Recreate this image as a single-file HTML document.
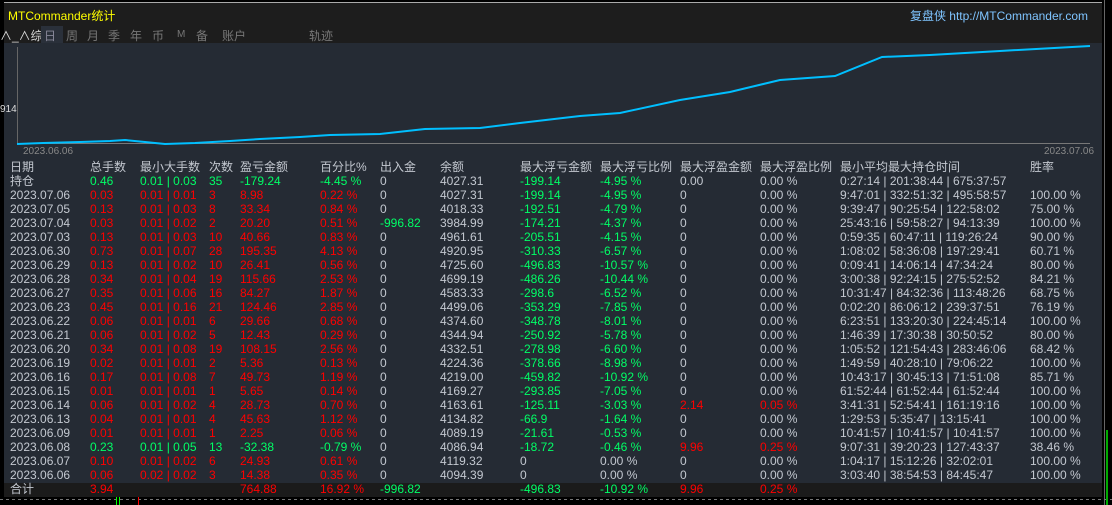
<!DOCTYPE html>
<html><head><meta charset="utf-8"><style>
*{margin:0;padding:0;box-sizing:border-box}
body{width:1112px;height:505px;background:#000;position:relative;overflow:hidden;font-family:"Liberation Sans","Noto Sans CJK SC",sans-serif;font-size:12px;color:#c3c8d0}
.top{position:absolute;left:4px;top:2px;width:1098px;height:41px;background:#1d1d1d;border-top:1px solid #aaa}
.title{position:absolute;left:4px;top:4px;color:#ffff00;font-size:12px}
.url{position:absolute;right:14px;top:4px;color:#7fc4ff;font-size:12px}
.tabs{position:absolute;left:0;top:24px;width:400px;height:18px;color:#777;font-size:12px;white-space:nowrap}
.tabs span{position:absolute;top:0;white-space:nowrap}
.main{position:absolute;left:4px;top:43px;width:1098px;height:454px;background:#252b34}
.tot{position:absolute;left:4px;top:483px;width:1098px;height:14px;background:#1b1b1b}
.r{position:absolute;left:0;width:1100px;height:14px;line-height:14px;white-space:nowrap}
.r span{position:absolute;top:0;white-space:nowrap}
.R{color:#f00}.G{color:#00ff66}
</style></head><body>
<div class="top"><div class="title">MTCommander统计</div><div class="url">复盘侠 http://MTCommander.com</div>
<div class="tabs"><span style="left:-4px;color:#ddd">∧_∧综∧</span><span style="left:37px;width:22px;height:17px;top:-1px;background:#2a303a"></span><span style="left:40px;color:#889">日</span><span style="left:62px">周</span><span style="left:83px">月</span><span style="left:104px">季</span><span style="left:126px">年</span><span style="left:148px">币</span><span style="left:173px;font-size:10px;top:2px">M</span><span style="left:192px">备</span><span style="left:218px">账户</span><span style="left:305px">轨迹</span></div></div>
<div class="main"></div>
<svg style="position:absolute;left:0;top:0" width="1112" height="505">
<line x1="17.5" y1="47" x2="17.5" y2="144" stroke="#666"/>
<line x1="17" y1="143.5" x2="1090" y2="143.5" stroke="#777"/>
<polyline fill="none" stroke="#00bfff" stroke-width="2" points="17,144 43,143 80,142 110,141 125,140 145,142 165,144 195,143 230,141 260,139 300,137 330,135 380,134 425,129 480,128 520,123 580,116 620,113 680,100 730,92 780,80 835,76 882,57 930,55 1000,51 1090,46"/>
<text x="23" y="154" fill="#888" font-size="10" font-family="Liberation Sans">2023.06.06</text>
<text x="1044" y="154" fill="#888" font-size="10" font-family="Liberation Sans">2023.07.06</text>
<text x="0" y="112" fill="#ddd" font-size="10" font-family="Liberation Sans">914</text>
<line x1="1104.5" y1="0" x2="1104.5" y2="505" stroke="#666"/>
<line x1="0" y1="499.5" x2="1112" y2="499.5" stroke="#777" stroke-dasharray="3,3"/>
<rect x="116" y="497" width="1" height="8" fill="#0f0"/><rect x="119" y="497" width="1" height="8" fill="#0f0"/><rect x="138" y="497" width="1" height="8" fill="#f00"/>
<rect x="1106" y="430" width="2" height="75" fill="#0a0"/>
</svg>
<div class="tot"></div>
<div id="t"></div>
<script>
const cols=[10,90,140,209,240,320,380,440,520,600,680,760,840,1030];
const H=["日期","总手数","最小大手数","次数","盈亏金额","百分比%","出入金","余额","最大浮亏金额","最大浮亏比例","最大浮盈金额","最大浮盈比例","最小平均最大持仓时间","胜率"];
const D=[
["持仓","0.46","0.01 | 0.03","35","-179.24","-4.45 %","0","4027.31","-199.14","-4.95 %","0.00","0.00 %","0:27:14 | 201:38:44 | 675:37:57","","G"],
["2023.07.06","0.03","0.01 | 0.01","3","8.98","0.22 %","0","4027.31","-199.14","-4.95 %","0","0.00 %","9:47:01 | 332:51:32 | 495:58:57","100.00 %"],
["2023.07.05","0.13","0.01 | 0.03","8","33.34","0.84 %","0","4018.33","-192.51","-4.79 %","0","0.00 %","9:39:47 | 90:25:54 | 122:58:02","75.00 %"],
["2023.07.04","0.03","0.01 | 0.02","2","20.20","0.51 %","-996.82","3984.99","-174.21","-4.37 %","0","0.00 %","25:43:16 | 59:58:27 | 94:13:39","100.00 %"],
["2023.07.03","0.13","0.01 | 0.03","10","40.66","0.83 %","0","4961.61","-205.51","-4.15 %","0","0.00 %","0:59:35 | 60:47:11 | 119:26:24","90.00 %"],
["2023.06.30","0.73","0.01 | 0.07","28","195.35","4.13 %","0","4920.95","-310.33","-6.57 %","0","0.00 %","1:08:02 | 58:36:08 | 197:29:41","60.71 %"],
["2023.06.29","0.13","0.01 | 0.02","10","26.41","0.56 %","0","4725.60","-496.83","-10.57 %","0","0.00 %","0:09:41 | 14:06:14 | 47:34:24","80.00 %"],
["2023.06.28","0.34","0.01 | 0.04","19","115.66","2.53 %","0","4699.19","-486.26","-10.44 %","0","0.00 %","3:00:38 | 92:24:15 | 275:52:52","84.21 %"],
["2023.06.27","0.35","0.01 | 0.06","16","84.27","1.87 %","0","4583.33","-298.6","-6.52 %","0","0.00 %","10:31:47 | 84:32:36 | 113:48:26","68.75 %"],
["2023.06.23","0.45","0.01 | 0.16","21","124.46","2.85 %","0","4499.06","-353.29","-7.85 %","0","0.00 %","0:02:20 | 86:06:12 | 239:37:51","76.19 %"],
["2023.06.22","0.06","0.01 | 0.01","6","29.66","0.68 %","0","4374.60","-348.78","-8.01 %","0","0.00 %","6:23:51 | 133:20:30 | 224:45:14","100.00 %"],
["2023.06.21","0.06","0.01 | 0.02","5","12.43","0.29 %","0","4344.94","-250.92","-5.78 %","0","0.00 %","1:46:39 | 17:30:38 | 30:50:52","80.00 %"],
["2023.06.20","0.34","0.01 | 0.08","19","108.15","2.56 %","0","4332.51","-278.98","-6.60 %","0","0.00 %","1:05:52 | 121:54:43 | 283:46:06","68.42 %"],
["2023.06.19","0.02","0.01 | 0.01","2","5.36","0.13 %","0","4224.36","-378.66","-8.98 %","0","0.00 %","1:49:59 | 40:28:10 | 79:06:22","100.00 %"],
["2023.06.16","0.17","0.01 | 0.08","7","49.73","1.19 %","0","4219.00","-459.82","-10.92 %","0","0.00 %","10:43:17 | 30:45:13 | 71:51:08","85.71 %"],
["2023.06.15","0.01","0.01 | 0.01","1","5.65","0.14 %","0","4169.27","-293.85","-7.05 %","0","0.00 %","61:52:44 | 61:52:44 | 61:52:44","100.00 %"],
["2023.06.14","0.06","0.01 | 0.02","4","28.73","0.70 %","0","4163.61","-125.11","-3.03 %","2.14","0.05 %","3:41:31 | 52:54:41 | 161:19:16","100.00 %"],
["2023.06.13","0.04","0.01 | 0.01","4","45.63","1.12 %","0","4134.82","-66.9","-1.64 %","0","0.00 %","1:29:53 | 5:35:47 | 13:15:41","100.00 %"],
["2023.06.09","0.01","0.01 | 0.01","1","2.25","0.06 %","0","4089.19","-21.61","-0.53 %","0","0.00 %","10:41:57 | 10:41:57 | 10:41:57","100.00 %"],
["2023.06.08","0.23","0.01 | 0.05","13","-32.38","-0.79 %","0","4086.94","-18.72","-0.46 %","9.96","0.25 %","9:07:31 | 39:20:23 | 127:43:37","38.46 %","G"],
["2023.06.07","0.10","0.01 | 0.02","6","24.93","0.61 %","0","4119.32","0","0.00 %","0","0.00 %","1:04:17 | 15:12:26 | 32:02:01","100.00 %"],
["2023.06.06","0.06","0.02 | 0.02","3","14.38","0.35 %","0","4094.39","0","0.00 %","0","0.00 %","3:03:40 | 38:54:53 | 84:45:47","100.00 %"],
["合计","3.94","","","764.88","16.92 %","-996.82","","-496.83","-10.92 %","9.96","0.25 %","",""]];
let h='<div class="r" style="top:160px;font-size:12px">'+H.map((t,i)=>`<span style="left:${cols[i]}px">${t}</span>`).join('')+'</div>';
D.forEach((r,k)=>{const y=174+k*14;const g=r[14]==="G";let s=`<div class="r" style="top:${y}px">`;
for(let i=0;i<14;i++){let t=r[i];if(t==="")continue;let c="";
if(i>=1&&i<=5)c=g?"G":"R";
if(i==6&&t!=="0")c="G";
if(i==8||i==9){if(t!=="0"&&t!=="0.00 %")c="G";}
if((i==10||i==11)&&t!=="0"&&t!=="0.00 %"&&t!=="0.00")c="R";
if(k==0&&i==10)c="";
s+=`<span class="${c}" style="left:${cols[i]}px">${t}</span>`;}
h+=s+'</div>';});
document.getElementById('t').innerHTML=h;
</script>
</body></html>
